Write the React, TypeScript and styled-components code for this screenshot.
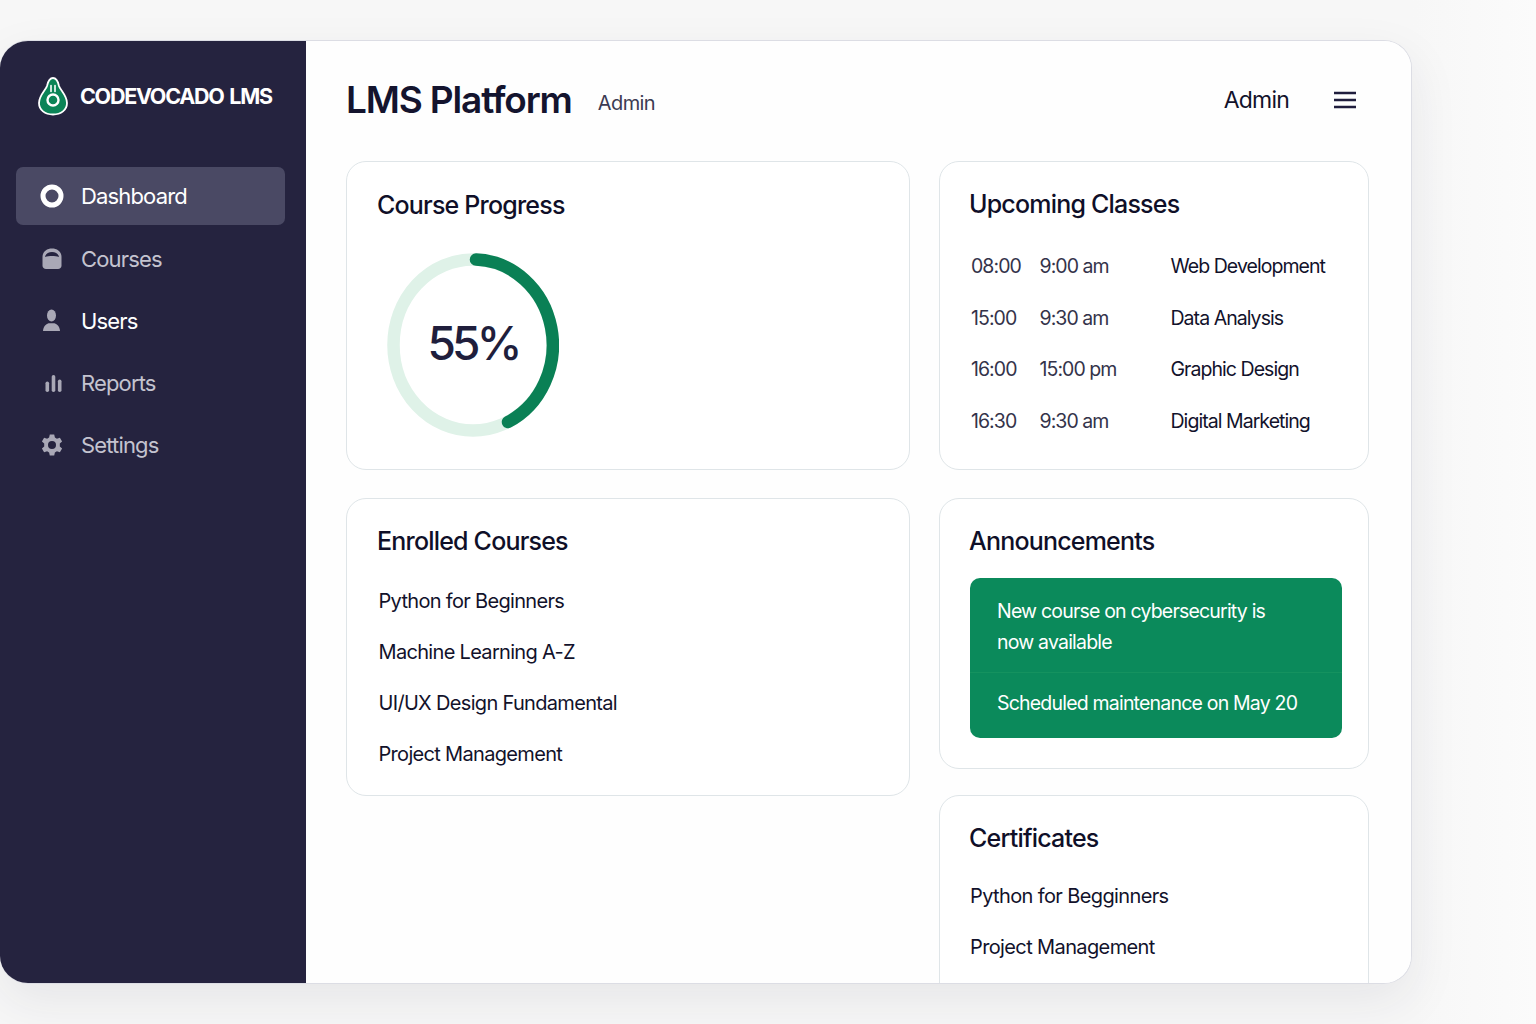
import { ReactNode } from 'react'
import styled, { createGlobalStyle } from 'styled-components'

const navItems: { label: string; icon: ReactNode; active?: boolean; bright?: boolean }[] = [
  {
    label: 'Dashboard',
    active: true,
    icon: (
      <svg width="26" height="26" viewBox="0 0 26 26">
        <circle cx="13" cy="13" r="9" fill="none" stroke="#fff" strokeWidth="5" />
      </svg>
    )
  },
  {
    label: 'Courses',
    icon: (
      <svg width="26" height="26" viewBox="0 0 26 26" fill="#a9a8b6">
        <path d="M3.500 11C3.500 5.500 8 2.500 13 2.500s9.500 3 9.500 8.500v8.500c0 2-1.500 3.500-3.500 3.500H7c-2 0-3.500-1.500-3.500-3.500z" />
        <path d="M6 11c.5-3 3.500-5 7-5s6.500 2 7 5c-2-.7-4.500-1-7-1s-5 .3-7 1z" fill="#25233f" />
      </svg>
    )
  },
  {
    label: 'Users',
    bright: true,
    icon: (
      <svg width="26" height="26" viewBox="0 0 26 26" fill="#a9a8b6">
        <ellipse cx="12.500" cy="7.500" rx="4.500" ry="6" />
        <path d="M4 23c.3-4.500 2.800-7 5.500-7.800h6c2.700.8 5.200 3.300 5.500 7.800z" />
      </svg>
    )
  },
  {
    label: 'Reports',
    icon: (
      <svg width="26" height="26" viewBox="0 0 26 26" fill="#a9a8b6">
        <rect x="6.500" y="11.500" width="3.600" height="10.500" rx="1.800" />
        <rect x="12.700" y="5" width="3.600" height="17" rx="1.800" />
        <rect x="18.900" y="9.500" width="3.600" height="12.500" rx="1.800" />
      </svg>
    )
  },
  {
    label: 'Settings',
    icon: (
      <svg width="26" height="26" viewBox="0 0 26 26" fill="#a9a8b6">
        <path
          fillRule="evenodd"
          d="M10.800 2.500h4.400l.7 3.100 2 1.100 3-1 2.200 3.800-2.300 2.100v2.800l2.300 2.100-2.200 3.800-3-1-2 1.100-.7 3.100h-4.400l-.7-3.100-2-1.100-3 1-2.200-3.800 2.300-2.100v-2.800L2.900 9.500l2.200-3.800 3 1 2-1.100zM13 9a4 4 0 1 0 0 8 4 4 0 0 0 0-8z"
        />
      </svg>
    )
  }
]

const classes = [
  ['08:00', '9:00 am', 'Web Development'],
  ['15:00', '9:30 am', 'Data Analysis'],
  ['16:00', '15:00 pm', 'Graphic Design'],
  ['16:30', '9:30 am', 'Digital Marketing']
]

const enrolled = ['Python for Beginners', 'Machine Learning A-Z', 'UI/UX Design Fundamental', 'Project Management']

const certificates = ['Python for Begginners', 'Project Management']

const App = () => (
  <>
    <GlobalStyle />
    <Page>
      <AppWindow>
        <Sidebar>
          <Brand>
            <svg width="32" height="40" viewBox="0 0 32 40">
              <path
                d="M16 2c3.600 0 5 3.500 6 8 1 3.800 8 9.500 8 17 0 7-6 11.500-14 11.500S2 34 2 27c0-7.500 7-13.200 8-17 1-4.500 2.400-8 6-8z"
                fill="#0b8457"
                stroke="#fff"
                strokeWidth="1.800"
              />
              <circle cx="16" cy="24" r="5.500" fill="none" stroke="#fff" strokeWidth="2.400" />
              <path d="M14 9.500v6M18 9.500v6" stroke="#fff" strokeWidth="1.600" strokeLinecap="round" />
            </svg>
            <BrandName>CODEVOCADO LMS</BrandName>
          </Brand>
          <Nav>
            {navItems.map((item) => (
              <NavItem key={item.label} $active={item.active} $bright={item.bright}>
                {item.icon}
                <span>{item.label}</span>
              </NavItem>
            ))}
          </Nav>
        </Sidebar>

        <Main>
          <Header>
            <Title>LMS Platform</Title>
            <Role>Admin</Role>
            <UserName>Admin</UserName>
            <svg width="24" height="24" viewBox="0 0 24 24" stroke="#1f1d3d" strokeWidth="2.400">
              <path d="M1 5h22M1 12h22M1 19h22" />
            </svg>
          </Header>

          <Columns>
            <LeftColumn>
              <ProgressCard>
                <CardTitle>Course Progress</CardTitle>
                <Ring>
                  <svg width="172" height="184" viewBox="0 0 172 184">
                    <ellipse cx="86" cy="92" rx="79.500" ry="85.500" fill="none" stroke="#dff2e8" strokeWidth="12.500" />
                    <path
                      d="M89 6.600A79.500 85.500 0 0 1 121 169"
                      fill="none"
                      stroke="#0a8055"
                      strokeWidth="12.500"
                      strokeLinecap="round"
                    />
                  </svg>
                  <RingValue>55%</RingValue>
                </Ring>
              </ProgressCard>

              <EnrolledCard>
                <CardTitle>Enrolled Courses</CardTitle>
                <EnrolledList>
                  {enrolled.map((course) => (
                    <li key={course}>{course}</li>
                  ))}
                </EnrolledList>
              </EnrolledCard>
            </LeftColumn>

            <RightColumn>
              <ClassesCard>
                <CardTitle>Upcoming Classes</CardTitle>
                <ClassesTable>
                  {classes.map(([start, end, name]) => (
                    <ClassRow key={name}>
                      <Muted>{start}</Muted>
                      <Muted>{end}</Muted>
                      <span>{name}</span>
                    </ClassRow>
                  ))}
                </ClassesTable>
              </ClassesCard>

              <AnnouncementsCard>
                <CardTitle>Announcements</CardTitle>
                <Notice>
                  <NoticeItem>
                    New course on cybersecurity is
                    <br />
                    now available
                  </NoticeItem>
                  <NoticeItem>Scheduled maintenance on May 20</NoticeItem>
                </Notice>
              </AnnouncementsCard>

              <CertificatesCard>
                <CardTitle>Certificates</CardTitle>
                <CertificateList>
                  {certificates.map((cert) => (
                    <li key={cert}>{cert}</li>
                  ))}
                </CertificateList>
              </CertificatesCard>
            </RightColumn>
          </Columns>
        </Main>
      </AppWindow>
    </Page>
  </>
)

const GlobalStyle = createGlobalStyle`
  html, body {
    margin: 0;
    padding: 0;
    background: #f9f9f9;
  }

  * {
    box-sizing: border-box;
  }

  body {
    font-family: Inter, "Liberation Sans", sans-serif;
    color: #12122b;
  }
`

const Page = styled.div`
  width: 1536px;
  height: 1024px;
  padding-top: 40px;
  overflow: hidden;
  background: linear-gradient(90deg, #f7f7f7 0%, #f7f7f7 92%, #fbfbfb 100%);
`

const AppWindow = styled.div`
  width: 1412px;
  height: 944px;
  display: flex;
  background: #fff;
  border-radius: 28px;
  overflow: hidden;
  border: 1px solid #dcdde4;
  border-left: none;
  box-shadow: 0 18px 50px rgba(40, 40, 60, 0.08);
`

const Sidebar = styled.aside`
  width: 306px;
  flex-shrink: 0;
  background: #25233f;
  padding: 35px 21px 0 16px;
`

const Brand = styled.div`
  display: flex;
  align-items: center;
  gap: 11px;
  padding-left: 21px;
  height: 40px;
`

const BrandName = styled.span`
  color: #fff;
  font-size: 21.5px;
  font-weight: 700;
  letter-spacing: -1.28px;
  word-spacing: 2px;
  white-space: nowrap;
`

const Nav = styled.nav`
  margin-top: 51px;
  display: flex;
  flex-direction: column;
  gap: 4px;
`

const NavItem = styled.div<{ $active?: boolean; $bright?: boolean }>`
  height: 58px;
  display: flex;
  align-items: center;
  gap: 16px;
  padding-left: 23px;
  padding-top: ${(p) => (p.$active ? 0 : 2)}px;
  border-radius: 7px;
  font-size: 22px;
  letter-spacing: -0.85px;
  background: ${(p) => (p.$active ? '#4a4964' : 'transparent')};
  color: ${(p) => (p.$active || p.$bright ? '#fff' : '#c4c3cf')};
`

const Main = styled.main`
  flex: 1;
  min-width: 0;
  padding: 0 41px 0 40px;
  background: #fefefe;
`

const Header = styled.header`
  height: 120px;
  padding-bottom: 2px;
  display: flex;
  align-items: center;
  padding-right: 13px;
`

const Title = styled.h1`
  margin: -2px 0 0;
  font-size: 37px;
  font-weight: 600;
  letter-spacing: -1.15px;
  color: #14142e;
`

const Role = styled.span`
  margin-left: 26px;
  margin-top: 6px;
  font-size: 20px;
  letter-spacing: -0.6px;
  color: #3c3b52;
`

const UserName = styled.span`
  margin-left: auto;
  margin-right: 44px;
  font-size: 23px;
  letter-spacing: -0.8px;
`

const Columns = styled.div`
  display: flex;
  gap: 29px;
  align-items: flex-start;
`

const LeftColumn = styled.div`
  width: 564px;
  display: flex;
  flex-direction: column;
  gap: 28px;
`

const RightColumn = styled.div`
  width: 430px;
  display: flex;
  flex-direction: column;
`

const Card = styled.section`
  border: 1px solid #dfe5e8;
  border-radius: 20px;
  background: #fff;
  padding: 25px 30px 0;
`

const CardTitle = styled.h2`
  margin: 0;
  font-size: 25px;
  line-height: 34px;
  font-weight: 500;
  letter-spacing: -0.8px;
  color: #0f0f28;
`

const ProgressCard = styled(Card)`
  height: 309px;
  padding-top: 26px;
`

const Ring = styled.div`
  position: relative;
  width: 172px;
  height: 184px;
  margin: 31px 0 0 10px;
`

const RingValue = styled.span`
  position: absolute;
  inset: 0 0 4px;
  display: flex;
  align-items: center;
  justify-content: center;
  font-size: 46px;
  letter-spacing: -3.8px;
  color: #201e3c;
  font-weight: 500;
`

const EnrolledCard = styled(Card)`
  height: 298px;
`

const EnrolledList = styled.ul`
  list-style: none;
  margin: 18px 0 0;
  padding: 0 0 0 1.500px;
  font-size: 20px;
  letter-spacing: -0.68px;

  li {
    height: 51px;
    line-height: 51px;
    white-space: nowrap;
  }
`

const ClassesCard = styled(Card)`
  height: 309px;
  padding-left: 29px;
`

const ClassesTable = styled.div`
  margin-top: 20px;
  font-size: 19.5px;
  letter-spacing: -0.95px;
`

const ClassRow = styled.div`
  display: grid;
  grid-template-columns: 68.500px 131px 1fr;
  height: 51.7px;
  line-height: 51.7px;
  padding-left: 2px;
  white-space: nowrap;
`

const Muted = styled.span`
  color: #34334a;
`

const AnnouncementsCard = styled(Card)`
  height: 271px;
  margin-top: 28px;
  padding-left: 29px;
  padding-right: 26px;
`

const Notice = styled.div`
  margin: 20px 0 0 1px;
  background: #0b8a5b;
  border-radius: 10px;
  color: #fff;
  font-size: 19.5px;
  line-height: 31px;
  letter-spacing: -0.8px;
`

const NoticeItem = styled.div`
  padding: 18px 27px 14px;

  & + & {
    border-top: 1px solid #15925f;
    padding: 15px 27px 19px;
  }
`

const CertificatesCard = styled(Card)`
  height: 220px;
  margin-top: 26px;
  padding-left: 29px;
`

const CertificateList = styled.ul`
  list-style: none;
  margin: 16px 0 0;
  padding: 0 0 0 1px;
  font-size: 20px;
  letter-spacing: -0.62px;

  li {
    height: 51px;
    line-height: 51px;
    white-space: nowrap;
  }
`

export default App
